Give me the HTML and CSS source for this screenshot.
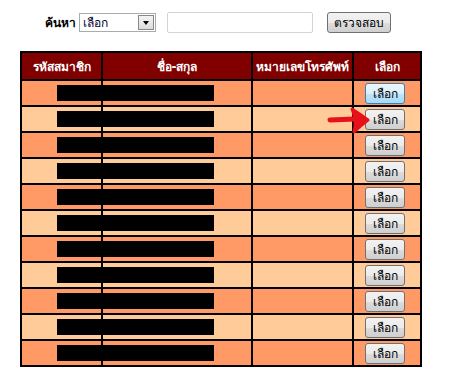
FILE: index.html
```html
<!DOCTYPE html>
<html lang="th">
<head>
    <meta charset="UTF-8">
    <title>ค้นหาสมาชิก</title>
    <link rel="stylesheet" href="styles.css">
</head>
<body>
    <div class="search">
        <span class="search-label">ค้นหา</span>
        <div class="select">
            <span class="select-text">เลือก</span>
            <span class="select-arrow"></span>
        </div>
        <input type="text" class="keyword">
        <button class="btn btn-check">ตรวจสอบ</button>
    </div>

    <div class="list">
        <table class="members">
            <colgroup>
                <col class="c1">
                <col class="c2">
                <col class="c3">
                <col class="c4">
            </colgroup>
            <thead>
                <tr>
                    <th>รหัสสมาชิก</th>
                    <th>ชื่อ-สกุล</th>
                    <th>หมายเลขโทรศัพท์</th>
                    <th>เลือก</th>
                </tr>
            </thead>
            <tbody>
                <tr><td><span class="hide hide-a"></span></td><td><span class="hide hide-b"></span></td><td></td><td><button class="btn btn-pick hover">เลือก</button></td></tr>
                <tr><td><span class="hide hide-a"></span></td><td><span class="hide hide-b"></span></td><td></td><td><button class="btn btn-pick">เลือก</button></td></tr>
                <tr><td><span class="hide hide-a"></span></td><td><span class="hide hide-b"></span></td><td></td><td><button class="btn btn-pick">เลือก</button></td></tr>
                <tr><td><span class="hide hide-a"></span></td><td><span class="hide hide-b"></span></td><td></td><td><button class="btn btn-pick">เลือก</button></td></tr>
                <tr><td><span class="hide hide-a"></span></td><td><span class="hide hide-b"></span></td><td></td><td><button class="btn btn-pick">เลือก</button></td></tr>
                <tr><td><span class="hide hide-a"></span></td><td><span class="hide hide-b"></span></td><td></td><td><button class="btn btn-pick">เลือก</button></td></tr>
                <tr><td><span class="hide hide-a"></span></td><td><span class="hide hide-b"></span></td><td></td><td><button class="btn btn-pick">เลือก</button></td></tr>
                <tr><td><span class="hide hide-a"></span></td><td><span class="hide hide-b"></span></td><td></td><td><button class="btn btn-pick">เลือก</button></td></tr>
                <tr><td><span class="hide hide-a"></span></td><td><span class="hide hide-b"></span></td><td></td><td><button class="btn btn-pick">เลือก</button></td></tr>
                <tr><td><span class="hide hide-a"></span></td><td><span class="hide hide-b"></span></td><td></td><td><button class="btn btn-pick">เลือก</button></td></tr>
                <tr><td><span class="hide hide-a"></span></td><td><span class="hide hide-b"></span></td><td></td><td><button class="btn btn-pick">เลือก</button></td></tr>
            </tbody>
        </table>

        <!-- ลูกศรชี้ปุ่ม -->
        <svg class="arrow" width="46" height="28" viewBox="0 0 46 28">
            <path d="M3 14 L28 13" stroke="#e8111a" stroke-width="5" fill="none" stroke-linecap="round"/>
            <path d="M25 3 Q33 8 41 14 Q33 20 27 26 Q30 14 25 3 Z" fill="#e8111a" stroke="#e8111a" stroke-width="3" stroke-linejoin="round"/>
        </svg>
    </div>
</body>
</html>
```

FILE: styles.css
```css
* {
    box-sizing: border-box;
}

body {
    margin: 0;
    background-color: #fff;
    font-family: Tahoma, "DejaVu Sans", "Noto Sans", sans-serif;
    font-size: 12px;
    color: #000;
}

.search {
    display: flex;
    align-items: center;
    height: 22px;
    margin-top: 11px;
    padding-left: 45px;
}

.search-label {
    font-weight: bold;
    font-size: 12px;
    margin-right: 3px;
}

.select {
    display: flex;
    align-items: center;
    width: 77px;
    height: 19px;
    border: 1px solid #a5acb2;
    background-color: #fff;
    padding: 1px;
    margin-right: 11px;
}

.select-text {
    flex: 1;
    padding-left: 2px;
    font-size: 12px;
    color: #000033;
}

.select-arrow {
    position: relative;
    width: 16px;
    height: 15px;
    border: 1px solid #888;
    background: linear-gradient(#f4f4f4, #dcdcdc);
}

.select-arrow::after {
    content: "";
    position: absolute;
    left: 4px;
    top: 5px;
    border-left: 3px solid transparent;
    border-right: 3px solid transparent;
    border-top: 4px solid #000;
}

.keyword {
    width: 146px;
    height: 21px;
    border: 1px solid #d4d4d4;
    border-radius: 2px;
    outline: none;
    margin: 0 14px 0 0;
}

.btn {
    font-family: Tahoma, "DejaVu Sans", "Noto Sans", sans-serif;
    font-size: 12px;
    color: #000;
    border: 1px solid #707070;
    border-radius: 3px;
    background: linear-gradient(#f2f2f2 0%, #ebebeb 50%, #dddddd 51%, #cfcfcf 100%);
    padding: 0;
    cursor: pointer;
}

.btn-check {
    width: 64px;
    height: 21px;
    margin-top: 1px;
}

.list {
    position: relative;
    margin: 18px 0 0 20px;
}

.members {
    width: 400px;
    table-layout: fixed;
    border-collapse: collapse;
    border: 2px solid #000;
}

.members .c1 { width: 81px; }
.members .c2 { width: 150px; }
.members .c3 { width: 101px; }
.members .c4 { width: 68px; }

.members th,
.members td {
    border: 2px solid #000;
    padding: 0;
}

.members th {
    height: 28px;
    background-color: #800000;
    color: #fff;
    font-weight: bold;
    font-size: 12px;
    text-align: center;
}

.members td {
    height: 26px;
    vertical-align: middle;
}

.members tbody tr:nth-child(odd) td {
    background-color: #ff9966;
}

.members tbody tr:nth-child(even) td {
    background-color: #ffcc99;
}

.hide {
    display: block;
    height: 16px;
    background-color: #000;
}

.hide-a {
    width: 44px;
    margin-left: auto;
}

.hide-b {
    width: 111px;
}

.members td:last-child {
    text-align: center;
}

.btn-pick {
    width: 40px;
    height: 21px;
    display: block;
    margin: 0 auto 0 11px;
}

.btn-pick.hover {
    border-color: #3c7fb1;
    background: linear-gradient(#eaf6fd 0%, #d9f0fc 50%, #bee6fd 51%, #a7d9f5 100%);
}

.arrow {
    position: absolute;
    left: 307px;
    top: 55px;
}
```
